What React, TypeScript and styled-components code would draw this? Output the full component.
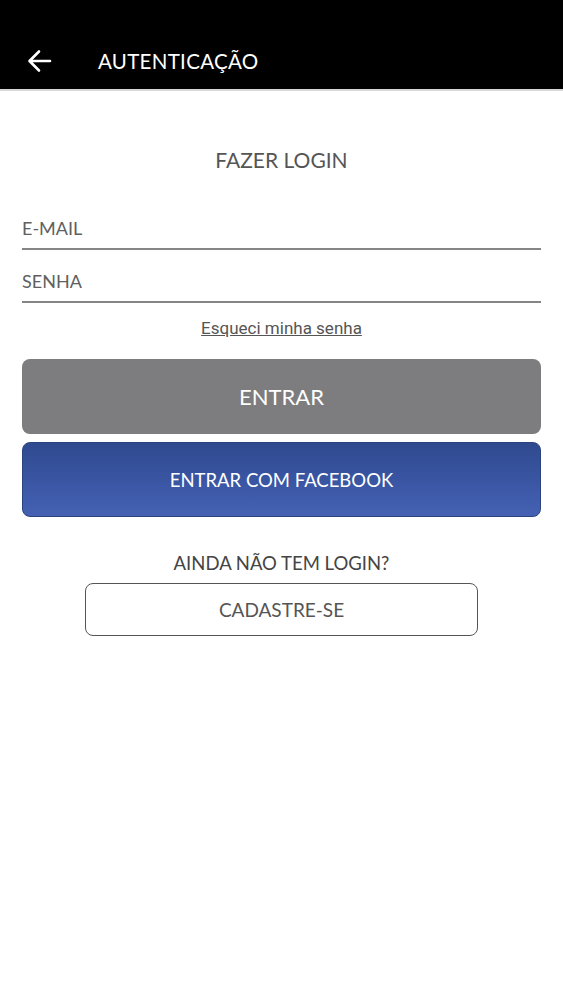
import React from 'react';
import styled, { createGlobalStyle } from 'styled-components';

const GlobalStyle = createGlobalStyle`
  html, body {
    margin: 0;
    padding: 0;
    background: #fff;
  }
  body {
    font-family: Lato, 'Noto Sans', sans-serif;
  }
`;

const Screen = styled.div`
  display: flex;
  flex-direction: column;
  width: 100%;
  min-height: 1000px;
  background: #fff;
`;

const TopBar = styled.header`
  display: flex;
  align-items: flex-end;
  height: 91px;
  box-sizing: border-box;
  padding: 0 0 14px 27px;
  background: #000;
  border-bottom: 2px solid #d8d8d8;
`;

const TopRow = styled.div`
  display: flex;
  align-items: center;
  height: 28px;
  gap: 46px;
`;

const BackButton = styled.button`
  display: flex;
  align-items: center;
  justify-content: center;
  width: 25px;
  height: 28px;
  padding: 0;
  border: none;
  background: transparent;
  cursor: pointer;
`;

const TopTitle = styled.h1`
  margin: 0;
  font-size: 20.5px;
  font-weight: 400;
  line-height: 28px;
  color: #fff;
  letter-spacing: 0.3px;
`;

const Content = styled.main`
  display: flex;
  flex-direction: column;
  padding: 0 22px;
`;

const PageTitle = styled.h2`
  margin: 57px 0 0;
  font-size: 21px;
  font-weight: 400;
  line-height: 24px;
  text-align: center;
  color: #555;
`;

const Field = styled.input<{ $first?: boolean }>`
  margin-top: ${(p) => (p.$first ? '45px' : '20px')};
  padding: 0 0 9px;
  height: 33px;
  box-sizing: border-box;
  width: 100%;
  border: none;
  border-bottom: 2px solid #858585;
  outline: none;
  background: transparent;
  font-family: inherit;
  font-size: 18px;
  line-height: 22px;
  color: #555;
  &::placeholder {
    color: #606060;
  }
`;

const ForgotLink = styled.a`
  align-self: center;
  margin-top: 15px;
  font-family: Roboto, 'Liberation Sans', sans-serif;
  font-size: 17px;
  line-height: 20px;
  color: #555;
  text-decoration: underline;
  cursor: pointer;
`;

const MainButton = styled.button<{ $variant: 'gray' | 'facebook' }>`
  width: 100%;
  height: 75px;
  margin-top: ${(p) => (p.$variant === 'gray' ? '21px' : '8px')};
  border-radius: 8px;
  border: ${(p) => (p.$variant === 'gray' ? 'none' : '1px solid #2d4380')};
  background: ${(p) =>
    p.$variant === 'gray' ? '#7d7c7e' : 'linear-gradient(180deg, #2f4a8e 0%, #3a56a4 55%, #4561b3 100%)'};
  color: #fff;
  font-family: inherit;
  font-size: ${(p) => (p.$variant === 'gray' ? '22px' : '18.5px')};
  font-weight: 400;
  cursor: pointer;
`;

const SignupPrompt = styled.p`
  margin: 34px 0 0;
  font-size: 18.5px;
  line-height: 24px;
  text-align: center;
  color: #444;
`;

const SignupButton = styled.button`
  align-self: center;
  width: 393px;
  height: 53px;
  margin-top: 8px;
  border: 1.5px solid #555;
  border-radius: 8px;
  background: #fff;
  color: #555;
  font-family: inherit;
  font-size: 19px;
  cursor: pointer;
`;

function BackArrow(): JSX.Element {
  return (
    <svg width="25" height="24" viewBox="0 0 25 24" fill="none">
      <path d="M23 12H3M12 2.5L2.5 12L12 21.5" stroke="#fff" strokeWidth="2.6" strokeLinecap="round" strokeLinejoin="round" />
    </svg>
  );
}

function App(): JSX.Element {
  return (
    <Screen>
      <GlobalStyle />
      <TopBar>
        <TopRow>
          <BackButton aria-label="Voltar">
            <BackArrow />
          </BackButton>
          <TopTitle>AUTENTICAÇÃO</TopTitle>
        </TopRow>
      </TopBar>
      <Content>
        <PageTitle>FAZER LOGIN</PageTitle>
        <Field $first placeholder="E-MAIL" type="email" />
        <Field placeholder="SENHA" type="password" />
        <ForgotLink>Esqueci minha senha</ForgotLink>
        <MainButton $variant="gray">ENTRAR</MainButton>
        <MainButton $variant="facebook">ENTRAR COM FACEBOOK</MainButton>
        <SignupPrompt>AINDA NÃO TEM LOGIN?</SignupPrompt>
        <SignupButton>CADASTRE-SE</SignupButton>
      </Content>
    </Screen>
  );
}

export default App;
